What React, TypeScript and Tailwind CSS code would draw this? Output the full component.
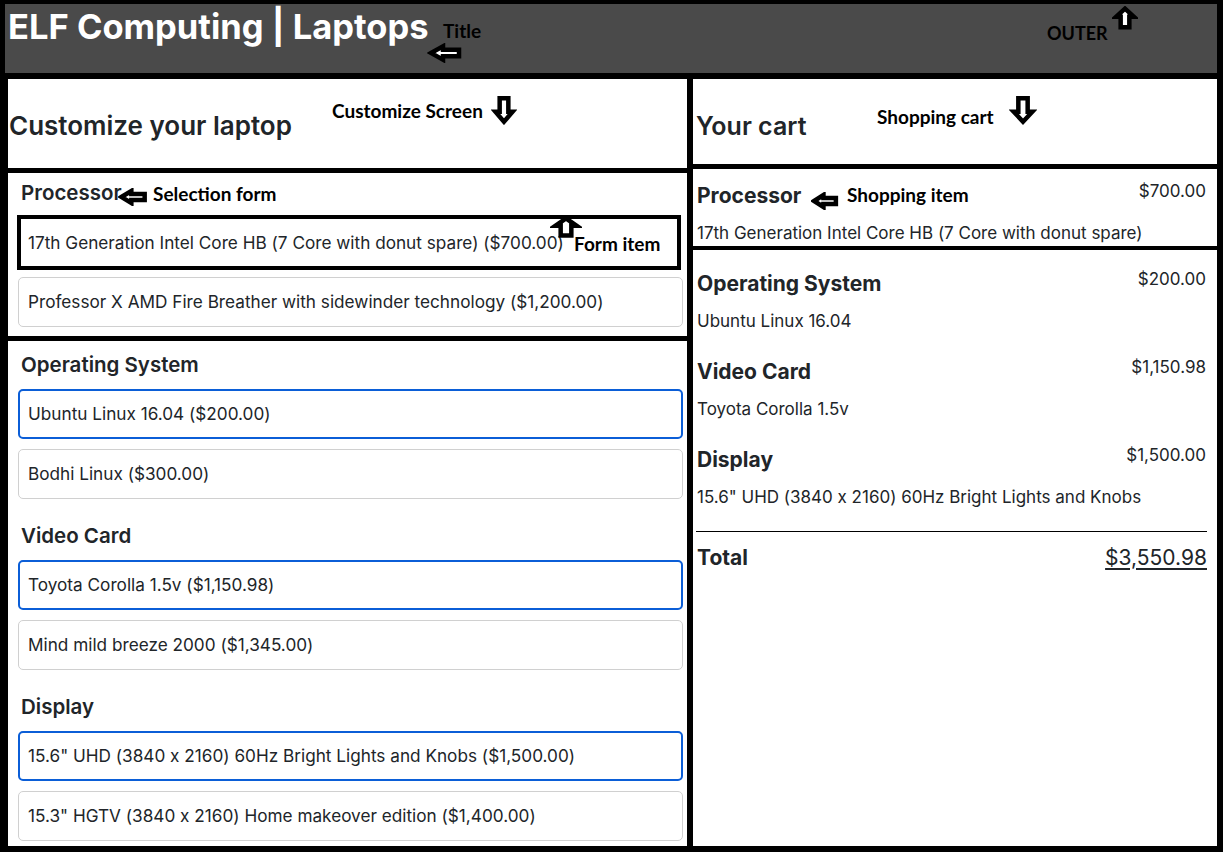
import React from 'react'

type Option = { label: string; price: string; selected?: boolean }
type Group = { name: string; options: Option[] }

const groups: Group[] = [
  {
    name: 'Operating System',
    options: [
      { label: 'Ubuntu Linux 16.04', price: '$200.00', selected: true },
      { label: 'Bodhi Linux', price: '$300.00' },
    ],
  },
  {
    name: 'Video Card',
    options: [
      { label: 'Toyota Corolla 1.5v', price: '$1,150.98', selected: true },
      { label: 'Mind mild breeze 2000', price: '$1,345.00' },
    ],
  },
  {
    name: 'Display',
    options: [
      { label: '15.6" UHD (3840 x 2160) 60Hz Bright Lights and Knobs', price: '$1,500.00', selected: true },
      { label: '15.3" HGTV (3840 x 2160) Home makeover edition', price: '$1,400.00' },
    ],
  },
]

const cart = [
  { name: 'Operating System', item: 'Ubuntu Linux 16.04', price: '$200.00' },
  { name: 'Video Card', item: 'Toyota Corolla 1.5v', price: '$1,150.98' },
  { name: 'Display', item: '15.6" UHD (3840 x 2160) 60Hz Bright Lights and Knobs', price: '$1,500.00' },
]

// block arrow, points left at rot 0
function Arrow({ rot, className }: { rot: number; className: string }) {
  return (
    <svg viewBox="0 0 36 36" preserveAspectRatio="none" className={className} aria-hidden>
      <g transform={`rotate(${rot} 18 18)`}>
        <path
          d="M4 18 L16 6 L16 12 L32 12 L32 24 L16 24 L16 30 Z"
          fill="white"
          stroke="black"
          strokeWidth={4.5}
          strokeLinejoin="miter"
          vectorEffect="non-scaling-stroke"
        />
      </g>
    </svg>
  )
}

function Note({ children, className }: { children: React.ReactNode; className: string }) {
  return (
    <span className={`absolute font-['Lato',sans-serif] font-bold leading-none text-black whitespace-nowrap ${className}`}>
      {children}
    </span>
  )
}

function FormItem({ opt, outlined }: { opt: Option; outlined?: boolean }) {
  const border = outlined
    ? 'border-4 border-black h-[55px] pl-[7px] mr-[2px] -ml-[1px]'
    : opt.selected
      ? 'border-2 border-[#0b5ed7] h-[50px] pl-[8px] rounded-[5px]'
      : 'border border-[#d0d0d0] h-[50px] pl-[9px] rounded-[5px]'
  return (
    <div className={`flex items-center text-[17.2px] text-[#212529] ${border}`}>
      {opt.label} ({opt.price})
    </div>
  )
}

export default function App() {
  return (
    <div className="relative w-[1223px] h-[852px] bg-black pt-[4px] pb-[6px] pl-[5px] pr-[6px] flex flex-col font-['Inter',sans-serif] [font-feature-settings:'calt'_0] text-[#212529]">
      <header className="h-[69px] bg-[#4a4a4a] px-[3px] pt-[3px]">
        <h1 className="text-white text-[34.5px] font-bold leading-[40px]">ELF Computing | Laptops</h1>
      </header>

      <div className="flex-1 mt-[6px] flex gap-[6px]">
        {/* customize screen */}
        <div className="w-[679px] ml-[3px] flex flex-col gap-[5px]">
          <div className="h-[89px] bg-white pl-[1px] pt-[31px]">
            <h2 className="text-[26px] font-semibold leading-[32px]">Customize your laptop</h2>
          </div>

          <div className="h-[163px] bg-white pl-[10px] pr-[4px] pt-[8px]">
            <h3 className="pl-[3px] text-[20.5px] font-semibold leading-[24px]">Processor</h3>
            <div className="mt-[10px] flex flex-col gap-[7px]">
              <FormItem outlined opt={{ label: '17th Generation Intel Core HB (7 Core with donut spare)', price: '$700.00' }} />
              <FormItem opt={{ label: 'Professor X AMD Fire Breather with sidewinder technology', price: '$1,200.00' }} />
            </div>
          </div>

          <div className="flex-1 bg-white pl-[10px] pr-[4px] pt-[12px] flex flex-col gap-[25px]">
            {groups.map((g) => (
              <section key={g.name}>
                <h3 className="pl-[3px] text-[20.5px] font-semibold leading-[24px]">{g.name}</h3>
                <div className="mt-[12px] flex flex-col gap-[10px]">
                  {g.options.map((o) => (
                    <FormItem key={o.label} opt={o} />
                  ))}
                </div>
              </section>
            ))}
          </div>
        </div>

        {/* shopping cart */}
        <div className="flex-1 flex flex-col">
          <div className="h-[85px] bg-white pl-[3px] pt-[31px]">
            <h2 className="text-[25px] font-semibold leading-[32px]">Your cart</h2>
          </div>

          <div className="mt-[5px] h-[77px] bg-white pl-[4px] pr-[11px] pt-[11px]">
            <div className="flex justify-between items-start">
              <span className="pt-[3px] text-[21px] font-bold leading-[26px]">Processor</span>
              <span className="text-[17px] leading-[22px]">$700.00</span>
            </div>
            <p className="mt-[13px] text-[17px] leading-[22px]">17th Generation Intel Core HB (7 Core with donut spare)</p>
          </div>

          <div className="mt-[4px] flex-1 bg-white pl-[4px] pr-[10px] pt-[18px]">
            <div className="flex flex-col gap-[24px]">
              {cart.map((c) => (
                <div key={c.name}>
                  <div className="flex justify-between items-start pr-[1px]">
                    <span className="pt-[3px] text-[21px] font-bold leading-[26px]">{c.name}</span>
                    <span className="text-[17px] leading-[22px]">{c.price}</span>
                  </div>
                  <p className="mt-[13px] text-[17px] leading-[22px]">{c.item}</p>
                </div>
              ))}
            </div>
            <hr className="mt-[23px] border-t border-black -ml-[1px]" />
            <div className="mt-[12px] flex justify-between items-center">
              <span className="text-[21px] font-bold leading-[28px]">Total</span>
              <span className="text-[21px] leading-[28px] underline underline-offset-[3px]">$3,550.98</span>
            </div>
          </div>
        </div>
      </div>

      {/* annotations */}
      <Note className="left-[443px] top-[21px] text-[19px]">Title</Note>
      <Arrow rot={0} className="absolute left-[427px] top-[43px] w-[36px] h-[20px]" />
      <Note className="left-[1047px] top-[24px] text-[18px]">OUTER</Note>
      <Arrow rot={90} className="absolute left-[1112px] top-[6px] w-[26px] h-[24px]" />
      <Note className="left-[332px] top-[101px] text-[19px]">Customize Screen</Note>
      <Arrow rot={-90} className="absolute left-[491px] top-[95px] w-[26px] h-[30px]" />
      <Note className="left-[877px] top-[107px] text-[19px]">Shopping cart</Note>
      <Arrow rot={-90} className="absolute left-[1009px] top-[95px] w-[28px] h-[30px]" />
      <Note className="left-[153px] top-[184px] text-[19px]">Selection form</Note>
      <Arrow rot={0} className="absolute left-[118px] top-[188px] w-[30px] h-[18px]" />
      <Note className="left-[574px] top-[234px] text-[19px]">Form item</Note>
      <Arrow rot={90} className="absolute left-[550px] top-[216px] w-[32px] h-[22px]" />
      <Note className="left-[847px] top-[185px] text-[19px]">Shopping item</Note>
      <Arrow rot={0} className="absolute left-[811px] top-[192px] w-[28px] h-[18px]" />
    </div>
  )
}
